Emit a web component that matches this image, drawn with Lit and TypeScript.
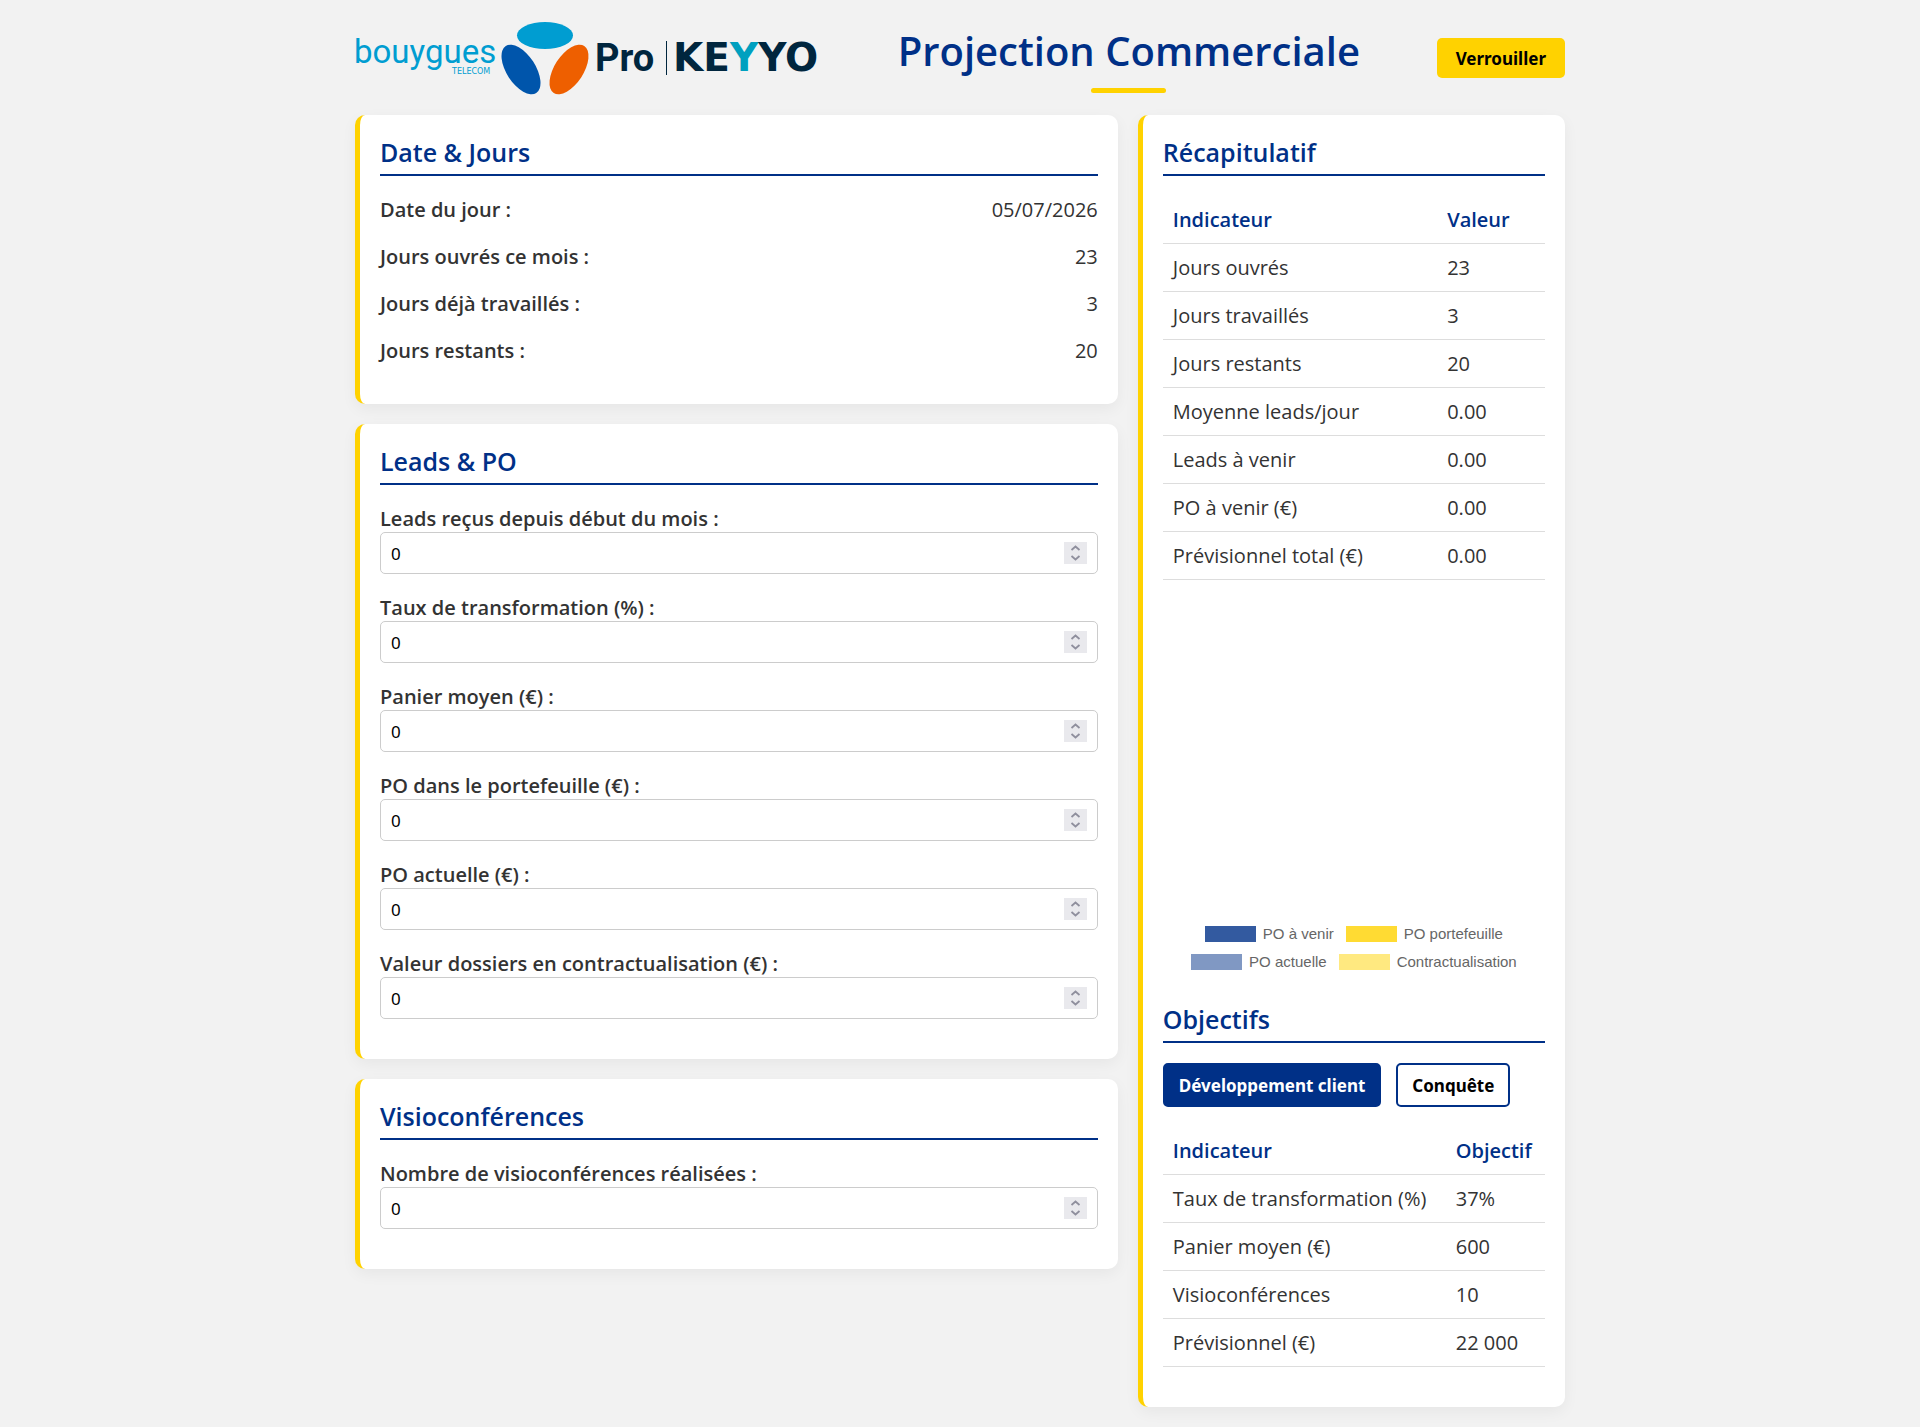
import { LitElement, html, css, svg } from "lit";
import { customElement, state, property } from "lit/decorators.js";

const base = css`
  * { box-sizing: border-box; }
`;

@customElement("brand-logo")
class BrandLogo extends LitElement {
  static styles = css`
    :host { display: block; flex: none; }
    svg { display: block; width: 466px; height: 75px; overflow: visible; }
    .bouygues { font: 400 33px "Roboto", sans-serif; fill: #009dd1; }
    .telecom { font: 400 8px "DejaVu Sans", sans-serif; fill: #009dd1; }
    .pro { font: 700 38px "Roboto", sans-serif; fill: #00263e; }
    .keyyo { font: 700 39px "DejaVu Sans", sans-serif; fill: #00263e; }
    .accent { fill: #00a0bf; }
  `;
  render() {
    return html`<svg viewBox="0 0 466 75" role="img" aria-label="Bouygues Telecom Pro Keyyo">
      ${svg`
        <text class="bouygues" x="-1" y="43">bouygues</text>
        <text class="telecom" x="97" y="54">TELECOM</text>
        <ellipse cx="190" cy="15.500" rx="28" ry="13.500" fill="#009dd1"/>
        <ellipse cx="166" cy="49.500" rx="28" ry="14.500" fill="#0055ab" transform="rotate(57 166 49.500)"/>
        <ellipse cx="214" cy="49.500" rx="28" ry="14.500" fill="#ee5f00" transform="rotate(-57 214 49.500)"/>
        <text class="pro" x="240" y="51">Pro</text>
        <rect x="311" y="21" width="1" height="34" fill="#00263e"/>
        <text class="keyyo" x="318" y="51">KE<tspan class="accent">Y</tspan>YO</text>
      `}
    </svg>`;
  }
}

@customElement("number-field")
class NumberField extends LitElement {
  @property() label = "";
  @property({ type: Number }) value = 0;
  static styles = [base, css`
    :host { display: block; margin-bottom: 20px; }
    label { display: block; font-weight: 600; line-height: 27px; }
    .box {
      display: flex; align-items: center; height: 42px; padding: 0 10px;
      border: 1px solid #ccc; border-radius: 5px; background: #fff;
    }
    input {
      flex: 1; min-width: 0; padding: 0; border: 0; outline: 0; background: none;
      color: #000; font: 17px "Noto Sans", sans-serif; appearance: textfield; -moz-appearance: textfield;
    }
    input::-webkit-inner-spin-button { appearance: none; -webkit-appearance: none; margin: 0; }
    .spin { flex: none; width: 23px; height: 22px; background: #e9e9ed; }
  `];
  render() {
    return html`
      <label for="value">${this.label}</label>
      <div class="box">
        <input id="value" type="number" .value=${String(this.value)}
          @input=${(e: Event) => { this.value = Number((e.target as HTMLInputElement).value); }}>
        <svg class="spin" viewBox="0 0 23 22" aria-hidden="true">
          <path d="M7.500 8 11.500 4.500 15.500 8M7.500 14 11.500 17.500 15.500 14" fill="none" stroke="#8f8f9d" stroke-width="1.800"/>
        </svg>
      </div>`;
  }
}

const LEADS = [
  "Leads reçus depuis début du mois :",
  "Taux de transformation (%) :",
  "Panier moyen (€) :",
  "PO dans le portefeuille (€) :",
  "PO actuelle (€) :",
  "Valeur dossiers en contractualisation (€) :",
];
const DAYS = [
  ["Date du jour :", "05/07/2026"],
  ["Jours ouvrés ce mois :", "23"],
  ["Jours déjà travaillés :", "3"],
  ["Jours restants :", "20"],
];
const SUMMARY = [
  ["Jours ouvrés", "23"],
  ["Jours travaillés", "3"],
  ["Jours restants", "20"],
  ["Moyenne leads/jour", "0.00"],
  ["Leads à venir", "0.00"],
  ["PO à venir (€)", "0.00"],
  ["Prévisionnel total (€)", "0.00"],
];
const GOALS = [
  ["Taux de transformation (%)", "37%"],
  ["Panier moyen (€)", "600"],
  ["Visioconférences", "10"],
  ["Prévisionnel (€)", "22 000"],
];

@customElement("app-root")
class AppRoot extends LitElement {
  @state() segment = "dev";
  static styles = [base, css`
    :host {
      display: block; min-height: 100vh; padding: 20px; background: #f2f2f2;
      color: #333; font: 20px/27px "Open Sans", "Noto Sans", sans-serif;
      box-sizing: border-box;
    }
    .page { max-width: 1210px; margin: 0 auto; }
    header { display: flex; align-items: center; justify-content: space-between; min-height: 75px; margin-bottom: 20px; }
    h1 {
      display: flex; flex-direction: column; align-items: center; gap: 10px; margin: 0; padding-top: 2px;
      color: #003087; font-size: 40px; font-weight: 600; line-height: 54px;
    }
    h1::after { content: ""; width: 75px; height: 5px; border-radius: 3px; background: #ffd200; }
    button { font: 700 17px/24px "Noto Sans", sans-serif; color: #000; border-radius: 5px; cursor: pointer; }
    .lock { height: 40px; padding: 2px 19px 0; border: 0; background: #ffd200; }
    .columns { display: grid; grid-template-columns: minmax(0, 25fr) minmax(0, 14fr); gap: 20px; align-items: start; }
    .stack { display: grid; gap: 20px; }
    .card {
      padding: 20px; border-left: 5px solid #ffd200; border-radius: 10px; background: #fff;
      box-shadow: 0 5px 15px rgba(0, 0, 0, 0.05);
    }
    h2 {
      margin: 0 0 20px; padding-bottom: 5px; border-bottom: 2px solid #003087;
      color: #003087; font-size: 25px; font-weight: 600; line-height: 34px;
    }
    dl { margin: 0; }
    .row { display: flex; justify-content: space-between; margin-bottom: 20px; }
    dt { font-weight: 600; }
    dd { margin: 0; }
    table { width: 100%; margin-bottom: 20px; border-collapse: separate; border-spacing: 0; }
    th, td { padding: 10px; border-bottom: 1px solid #ddd; text-align: left; }
    th { color: #003087; font-weight: 600; }
    .chart { display: flex; flex-direction: column; justify-content: flex-end; aspect-ratio: 1; margin-bottom: 20px; padding-bottom: 6px; }
    .legend {
      display: flex; flex-wrap: wrap; justify-content: center; column-gap: 12px; margin: 0; padding: 0 20px;
      list-style: none; color: #666; font: 15px/28px "Liberation Sans", Arial, sans-serif;
    }
    .legend li { display: flex; align-items: center; gap: 7px; }
    .swatch { width: 51px; height: 16px; }
    .coming { background: #335aa0; }
    .portfolio { background: #ffdb33; }
    .current { background: #8098c3; }
    .contract { background: #ffe980; }
    .tabs { display: flex; gap: 15px; margin-bottom: 20px; }
    .tab { height: 44px; padding: 2px 14px 0; border: 2px solid #003087; background: #fff; }
    .tab[aria-pressed="true"] { background: #003087; color: #fff; }
  `];

  table(head: string, rows: string[][]) {
    return html`<table>
      <thead><tr><th scope="col">Indicateur</th><th scope="col">${head}</th></tr></thead>
      <tbody>${rows.map(([name, value]) => html`<tr><td>${name}</td><td>${value}</td></tr>`)}</tbody>
    </table>`;
  }

  tab(id: string, text: string) {
    return html`<button class="tab" type="button" aria-pressed=${this.segment === id ? "true" : "false"}
      @click=${() => { this.segment = id; }}>${text}</button>`;
  }

  render() {
    return html`<div class="page">
      <header>
        <brand-logo></brand-logo>
        <h1>Projection Commerciale</h1>
        <button class="lock" type="button">Verrouiller</button>
      </header>
      <main class="columns">
        <div class="stack">
          <section class="card">
            <h2>Date &amp; Jours</h2>
            <dl>${DAYS.map(([name, value]) => html`<div class="row"><dt>${name}</dt><dd>${value}</dd></div>`)}</dl>
          </section>
          <section class="card">
            <h2>Leads &amp; PO</h2>
            ${LEADS.map((name) => html`<number-field label=${name}></number-field>`)}
          </section>
          <section class="card">
            <h2>Visioconférences</h2>
            <number-field label="Nombre de visioconférences réalisées :"></number-field>
          </section>
        </div>
        <aside class="card">
          <h2>Récapitulatif</h2>
          ${this.table("Valeur", SUMMARY)}
          <div class="chart">
            <ul class="legend">
              <li><span class="swatch coming"></span>PO à venir</li>
              <li><span class="swatch portfolio"></span>PO portefeuille</li>
              <li><span class="swatch current"></span>PO actuelle</li>
              <li><span class="swatch contract"></span>Contractualisation</li>
            </ul>
          </div>
          <h2>Objectifs</h2>
          <div class="tabs">${this.tab("dev", "Développement client")}${this.tab("conquest", "Conquête")}</div>
          ${this.table("Objectif", GOALS)}
        </aside>
      </main>
    </div>`;
  }
}
